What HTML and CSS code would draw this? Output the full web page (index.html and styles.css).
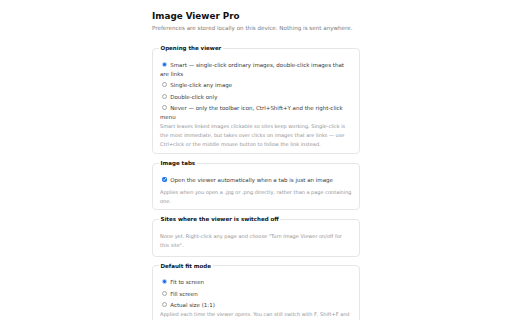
FILE: index.html
```html
<!DOCTYPE html>
<html lang="en">
<head>
<meta charset="utf-8">
<title>Image Viewer Pro — Options</title>
<link rel="stylesheet" href="styles.css">
</head>
<body>
<main class="page">
  <h1 class="title">Image Viewer Pro</h1>
  <p class="sub">Preferences are stored locally on this device. Nothing is sent anywhere.</p>

  <fieldset class="group">
    <legend class="legend">Opening the viewer</legend>
    <div class="options">
      <label class="opt"><input class="radio" type="radio" name="open" checked> Smart — single-click ordinary images, double-click images that are links</label>
      <label class="opt"><input class="radio" type="radio" name="open"> Single-click any image</label>
      <label class="opt"><input class="radio" type="radio" name="open"> Double-click only</label>
      <label class="opt"><input class="radio" type="radio" name="open"> Never — only the toolbar icon, Ctrl+Shift+Y and the right-click menu</label>
    </div>
    <p class="hint">Smart leaves linked images clickable so sites keep working. Single-click is the most immediate, but takes over clicks on images that are links — use Ctrl+click or the middle mouse button to follow the link instead.</p>
  </fieldset>

  <fieldset class="group group-tabs">
    <legend class="legend">Image tabs</legend>
    <div class="options">
      <label class="opt"><input class="check" type="checkbox" checked> Open the viewer automatically when a tab is just an image</label>
    </div>
    <p class="hint hint-gap">Applies when you open a .jpg or .png directly, rather than a page containing one.</p>
  </fieldset>

  <fieldset class="group">
    <legend class="legend">Sites where the viewer is switched off</legend>
    <p class="hint hint-only">None yet. Right-click any page and choose "Turn Image Viewer on/off for this site".</p>
    <ul class="site-list"></ul>
  </fieldset>

  <fieldset class="group">
    <legend class="legend">Default fit mode</legend>
    <div class="options">
      <label class="opt"><input class="radio" type="radio" name="fit" checked> Fit to screen</label>
      <label class="opt"><input class="radio" type="radio" name="fit"> Fill screen</label>
      <label class="opt"><input class="radio" type="radio" name="fit"> Actual size (1:1)</label>
    </div>
    <p class="hint">Applied each time the viewer opens. You can still switch with F, Shift+F and 1 while viewing.</p>
  </fieldset>
</main>
</body>
</html>
```
FILE: styles.css
```css
html, body {
  margin: 0;
  padding: 0;
  background: #ffffff;
}
body {
  font-family: "DejaVu Sans", Verdana, sans-serif;
  color: #222;
}
.page {
  width: 208px;
  margin: 0 auto;
  padding-top: 11px;
}
.title {
  margin: 0;
  font-size: 8.8px;
  line-height: 11px;
  font-weight: bold;
  color: #111;
}
.sub {
  margin: 2px 0 13px;
  font-size: 5.6px;
  line-height: 8px;
  color: #7a7a7a;
}
.group {
  margin: 0 0 6px;
  padding: 9.5px 7px 4px;
  border: 1px solid #e6e6e6;
  border-radius: 4px;
}
.group-tabs {
  padding-bottom: 3px;
}
.legend {
  padding: 0 1.5px;
  margin-left: -1px;
  font-size: 5.5px;
  font-weight: bold;
  color: #111;
}
.options {
  display: flex;
  flex-direction: column;
  gap: 2.5px;
}
.opt {
  font-size: 5.5px;
  line-height: 9px;
  color: #3a3a3a;
}
.radio {
  appearance: none;
  -webkit-appearance: none;
  box-sizing: border-box;
  display: inline-block;
  width: 5px;
  height: 5px;
  margin: 0 1.5px 0 2px;
  vertical-align: -0.4px;
  border: 0.6px solid #a8a8a8;
  border-radius: 50%;
  background: #fff;
}
.radio:checked {
  border-color: #9cc0f5;
  background: radial-gradient(circle, #1a73e8 0 1.6px, #fff 1.9px);
}
.check {
  width: 5px;
  height: 5px;
  margin: 0 1.5px 0 2px;
  vertical-align: -0.4px;
  accent-color: #1a73e8;
}
.hint {
  margin: 0;
  font-size: 5px;
  line-height: 9px;
  color: #939393;
}
.hint-gap {
  margin-top: 3.5px;
}
.hint-only {
  margin-top: 0;
}
.site-list {
  margin: 2px 0 0;
  padding: 0;
  list-style: none;
}
```
